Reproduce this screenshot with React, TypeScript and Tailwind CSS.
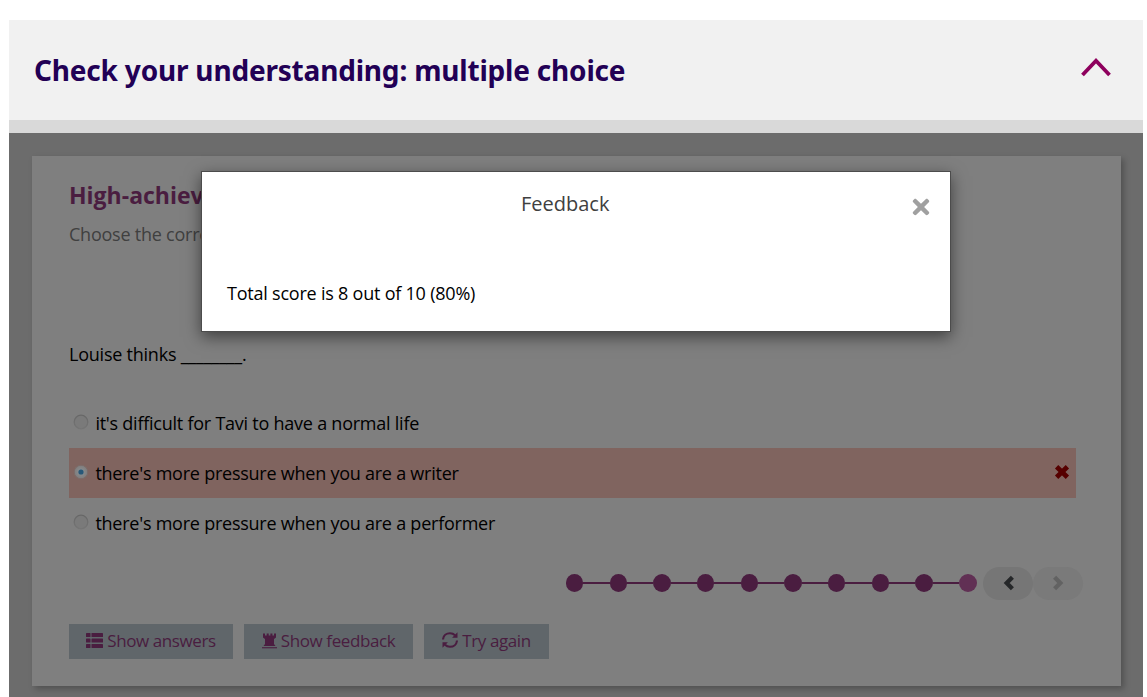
import { FaTimes } from "react-icons/fa";

const options = [
  { label: "it's difficult for Tavi to have a normal life", wrong: false },
  { label: "there's more pressure when you are a writer", wrong: true },
  { label: "there's more pressure when you are a performer", wrong: false },
];

function Radio({ checked }: { checked: boolean }) {
  return (
    <svg width="16" height="16" viewBox="0 0 16 16" className="mb-[2px] shrink-0">
      <defs>
        <linearGradient id="ring" x1="0" y1="0" x2="0" y2="1">
          <stop offset="0" stopColor="#676767" />
          <stop offset="1" stopColor="#757575" />
        </linearGradient>
        <radialGradient id="on">
          <stop offset="0" stopColor="#8a9398" />
          <stop offset="1" stopColor="#807c7b" />
        </radialGradient>
      </defs>
      {checked ? (
        <>
          <circle cx="8" cy="8" r="6.8" fill="url(#on)" stroke="#7c6b68" />
          <circle cx="8" cy="8" r="2.6" fill="#285878" />
        </>
      ) : (
        <circle cx="8" cy="8" r="6.8" fill="#7a7a7a" stroke="url(#ring)" strokeWidth="1.3" />
      )}
    </svg>
  );
}

function Chevron({ flip, color }: { flip?: boolean; color: string }) {
  return (
    <svg width="12" height="16" viewBox="0 0 12 16" className={flip ? "mb-px -scale-x-100" : "mr-px mb-[2px] ml-[2px]"}>
      <path d="M9.400 2.200 L3.700 8 L9.400 13.800" fill="none" stroke={color} strokeWidth="4.300" />
    </svg>
  );
}

function ListIcon() {
  return (
    <svg width="17" height="15" viewBox="0 0 17 15" fill="#4a1d40">
      <rect x="0" y="0" width="4.500" height="4" rx=".6" />
      <rect x="5.500" y="0" width="11.500" height="4" rx=".6" />
      <rect x="0" y="5.500" width="4.500" height="4" rx=".6" />
      <rect x="5.500" y="5.500" width="11.500" height="4" rx=".6" />
      <rect x="0" y="11" width="4.500" height="4" rx=".6" />
      <rect x="5.500" y="11" width="11.500" height="4" rx=".6" />
    </svg>
  );
}

function Rook() {
  return (
    <svg width="15" height="16" viewBox="0 0 15 16" fill="#4a1d40">
      <path d="M1 .5h2v2h1.700v-2h2v2h1.700v-2h2v2h1.600v-2h2v4L12 6v5l1.500 2h-12L3 11V6L1 4.500z" />
      <path d="M0 14.200h15v1.100H0z" />
    </svg>
  );
}

function Refresh() {
  return (
    <svg width="16" height="16" viewBox="0 0 16 16" fill="none" stroke="#4a1d40" strokeWidth="2.100" className="mb-px">
      <path d="M1 7.500 C1.300 3.500 4.500 1.300 8 1.300 C10 1.300 11.700 2 13 3.300" />
      <path d="M15 8.500 C14.700 12.500 11.500 14.700 8 14.700 C6 14.700 4.300 14 3 12.700" />
      <path d="M15.500 .3V5.700H10.100zM.5 15.700V10.300H5.900z" fill="#4a1d40" stroke="none" />
    </svg>
  );
}

export default function App() {
  return (
    <div className="relative h-[697px] w-[1147px] overflow-hidden bg-white pt-5 pl-[9px] font-['Open_Sans',sans-serif]">
      <div className="flex h-[677px] w-[1134px] flex-col bg-[#6c6c6c]">
        <header className="flex h-[113px] shrink-0 items-start justify-between border-b-[13px] border-[#d9d9d9] bg-[#f1f1f1] pr-8 pl-[25px]">
          <h1 className="pt-[31px] font-['Noto_Sans',sans-serif] text-[28px] leading-[38px] font-bold tracking-[-0.19px] text-[#220055]">
            Check your understanding: multiple choice
          </h1>
          <svg width="30" height="20" viewBox="0 0 30 20" className="mt-[38px]">
            <path d="M1.500 17 L15 2.800 L28.500 17" fill="none" stroke="#8e005d" strokeWidth="3.800" />
          </svg>
        </header>
        <main className="mt-[23px] ml-[23px] flex h-[530px] w-[1089px] shrink-0 flex-col bg-[#7f7f7f] px-[37px] shadow-[3px_3px_6px_rgba(0,0,0,0.25)]">
          <h2 className="mt-[23px] text-[23px] leading-[32px] font-bold text-[#4a1d40]">High-achieving teenagers</h2>
          <p className="mt-[10px] text-[18px] leading-[26px] tracking-[-0.23px] text-[#404040]">
            Choose the correct answer.
          </p>
          <p className="mt-[94px] text-[18px] leading-[26px] tracking-[-0.23px] text-black">Louise thinks ________.</p>
          <div className="mt-[31px]">
            {options.map((o) => (
              <div
                key={o.label}
                className={`flex h-[50px] w-[1007px] items-center pl-[4.4px] ${o.wrong ? "bg-[#80645f]" : ""}`}
              >
                <Radio checked={o.wrong} />
                <span className="ml-[6px] text-[18px] tracking-[-0.24px] text-black">{o.label}</span>
                {o.wrong && (
                  <svg width="16" height="16" viewBox="0 0 16 16" className="mr-[6px] mb-[2px] ml-auto">
                    <path d="M2.600 2.800 L13.400 13.200 M13.400 2.800 L2.600 13.200" stroke="#560000" strokeWidth="4.800" />
                  </svg>
                )}
              </div>
            ))}
          </div>
          <div className="mt-[19px] flex h-[33px] w-[1014px] items-center justify-end">
            {Array.from({ length: 10 }, (_, i) => (
              <div key={i} className="mb-[1.5px] flex items-center">
                {i > 0 && <div className="h-[2px] w-[26.3px] bg-[#4a1d40]" />}
                <div className={`h-[18px] w-[17.4px] rounded-full ${i === 9 ? "bg-[#613054]" : "bg-[#4a1d40]"}`} />
              </div>
            ))}
            <div className="ml-[6.5px] flex h-[33px] w-[50px] items-center justify-center rounded-full bg-[#767676]">
              <Chevron color="#252729" />
            </div>
            <div className="flex h-[33px] w-[50px] items-center justify-center rounded-full bg-[#7a7a7a]">
              <Chevron flip color="#626262" />
            </div>
          </div>
          <div className="mt-[24px] flex gap-[11px] text-[17px] tracking-[-0.4px] text-[#4a1d40]">
            <div className="flex h-[35px] w-[164px] items-center justify-center gap-1 bg-[#60666a] pb-[2px]">
              <ListIcon />
              <span>Show answers</span>
            </div>
            <div className="flex h-[35px] w-[169px] items-center justify-center gap-1 bg-[#60666a] pb-[2px]">
              <Rook />
              <span>Show feedback</span>
            </div>
            <div className="flex h-[35px] w-[125px] items-center justify-center gap-1 bg-[#60666a] pb-[2px]">
              <Refresh />
              <span>Try again</span>
            </div>
          </div>
        </main>
      </div>
      <div
        role="dialog"
        className="absolute top-[171px] left-[201px] h-[161px] w-[750px] border border-[#4c4c4c] bg-white shadow-[0_5px_15px_rgba(0,0,0,0.5)]"
      >
        <div className="flex h-[46px] pt-[18px] pr-[17px] pl-[319px]">
          <h3 className="text-[20px] leading-[28px] text-[#404040]">Feedback</h3>
          <FaTimes className="mt-[5px] ml-auto" size={24} color="#a0a0a0" />
        </div>
        <p className="mt-[62px] ml-[25px] text-[18px] leading-[26px] tracking-[-0.22px] text-black">
          Total score is 8 out of 10 (80%)
        </p>
      </div>
    </div>
  );
}
